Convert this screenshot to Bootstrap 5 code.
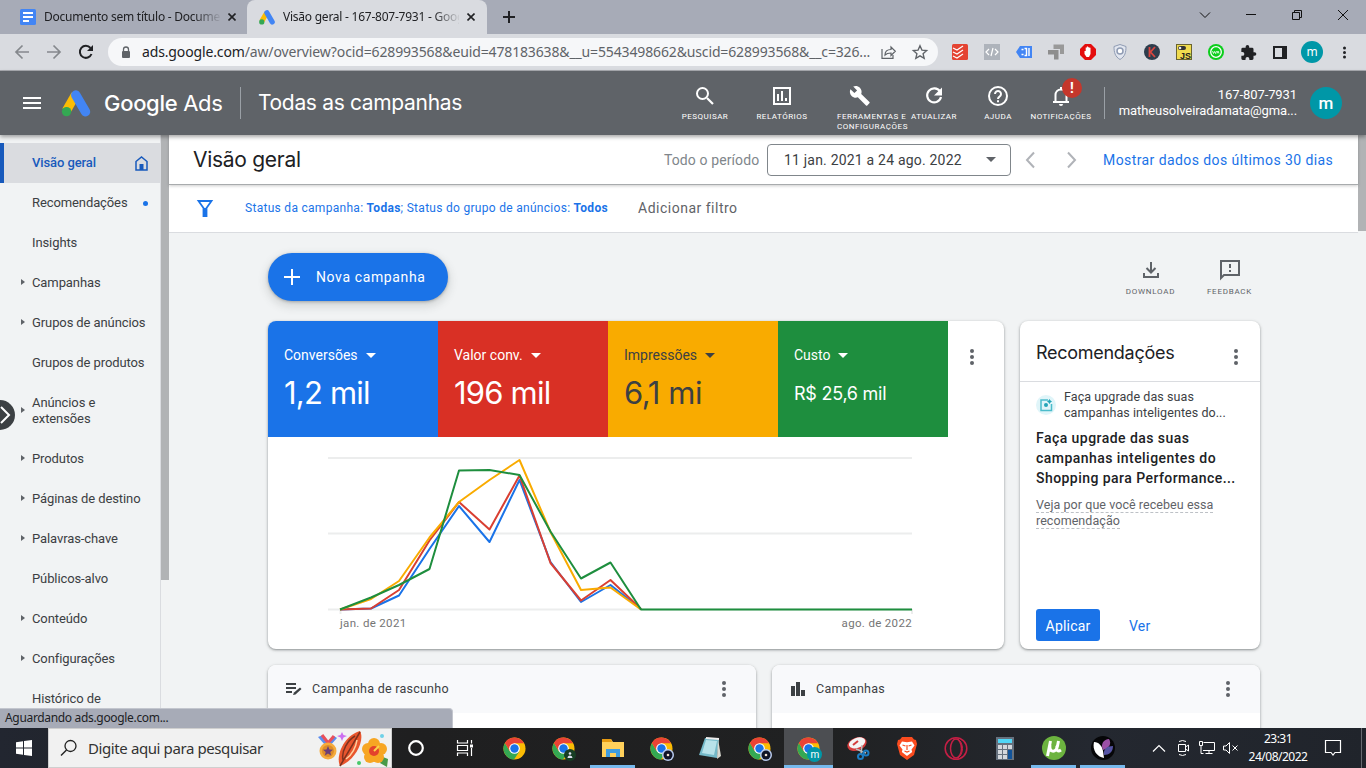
<!DOCTYPE html>
<html lang="pt-BR">
<head>
<meta charset="utf-8">
<title>Visão geral - Google Ads</title>
<link href="https://cdn.jsdelivr.net/npm/bootstrap@5.3.0/dist/css/bootstrap.min.css" rel="stylesheet">
<style>
html,body{width:1366px;height:768px;overflow:hidden}
body{font-family:Roboto,"Liberation Sans",sans-serif;font-size:13px;line-height:16px;color:#3c4043;background:#f1f3f4}
svg{display:block;flex:none;overflow:visible}
.gs{font-family:Inter,Roboto,sans-serif}
.sys{font-family:"Noto Sans","Open Sans",sans-serif}
.nw{white-space:nowrap}
.w-box{flex:none;display:flex;align-items:center;justify-content:center}
/* browser chrome */
.tabstrip{height:34px;background:#a7abb7;font-size:12px;color:#202124}
.tab-a{width:247px;padding-left:20px}
.tab-b{width:240px;padding-left:12px;background:#d9dbe0;border-radius:8px 8px 0 0;color:#202124}
.tab-t{width:176px;margin-left:8px;letter-spacing:-.24px;-webkit-mask-image:linear-gradient(90deg,#000 150px,transparent 178px);mask-image:linear-gradient(90deg,#000 150px,transparent 178px)}
.toolbar{height:37px;background:#d9dbe0;border-bottom:1px solid #a9abb0}
.omni{width:830px;height:28px;border-radius:14px;background:#f6f7f9;font-size:14px;color:#5f6368;padding-left:12px}
.omni b{font-weight:400;color:#202124}
.url{width:727px;margin-left:10px;letter-spacing:-.14px}
.ext{width:32px}
.av{border-radius:50%;background:#0097a7;color:#fff}
/* ads header */
.adsbar{height:64px;background:#5f6368;color:#fff;z-index:5;box-shadow:0 2px 4px rgba(0,0,0,.35)}
.vline{width:1px;height:32px;background:#9aa0a6;flex:none}
.tool{flex:none;display:flex;flex-direction:column;align-items:center;padding-top:13px;font-size:8px;line-height:10px;letter-spacing:.5px;height:64px;position:relative}
.tool svg{margin-bottom:4px}
.warn{position:absolute;width:20px;height:20px;border-radius:50%;background:#c5372c;left:34px;top:7px;font-size:14px;font-weight:700;line-height:20px;text-align:center;letter-spacing:0}
/* page */
.pagearea{height:593px;overflow:hidden}
.sidebar{width:161px;border-right:1px solid #dadce0;padding-top:8px}
.sideitem{height:40px;padding-left:32px;letter-spacing:-.1px;display:flex;align-items:center;position:relative;flex:none}
.sideitem.tall{height:56px}
.sideitem.sel{background:#dadce0;color:#185abc;border-left:4px solid #185abc;padding-left:28px;font-weight:500;letter-spacing:-.1px}
.sideitem.sub::before{content:"";position:absolute;left:21px;top:50%;margin-top:-4px;border:3px solid transparent;border-left:4px solid #5f6368;border-right:0}
.thumb{width:8px;background:#b1b3b5;flex:none}
.knob{position:absolute;left:-15px;top:265px;width:30px;height:30px;border-radius:50%;background:#3c4043;z-index:3}
.titlebar{height:50px;background:#fff;border-bottom:1px solid #a8abad;box-shadow:0 1px 3px rgba(0,0,0,.2);z-index:2;position:relative}
.filterbar{height:48px;background:#fff;border-bottom:1px solid #dadce0;padding-bottom:2px}
.datebox{width:244px;height:32px;border:1px solid #80868b;border-radius:4px;padding:0 14px 0 16px;font-size:14px;letter-spacing:.2px}
.blue{color:#1a73e8}
.content{padding:20px 98px 0 99px}
.fab{width:180px;height:48px;border-radius:24px;background:#1a73e8;color:#fff;font-size:14px;letter-spacing:.62px;padding:0 0 0 12px;border:0;box-shadow:0 1px 3px rgba(60,64,67,.35),0 4px 8px 2px rgba(60,64,67,.15)}
.mini{font-size:8px;line-height:10px;letter-spacing:.75px;color:#5f6368;width:79px;display:flex;flex-direction:column;align-items:center;gap:5px;padding-top:5px}
.panel{background:#fff;border-radius:8px;box-shadow:0 1px 2px rgba(60,64,67,.4),0 1px 3px 1px rgba(60,64,67,.15);overflow:hidden;flex:none}
.metric{width:170px;height:116px;padding:26px 0 0 16px;color:#fff;font-size:14px;flex:none}
.metric .val{font-size:31px;line-height:40px;margin-top:10px;letter-spacing:-.8px}
.caret{display:inline-block;border:5px solid transparent;border-top-color:currentColor;border-bottom:0;margin-left:8px;vertical-align:2px}
.rechead{height:61px;border-bottom:1px solid #dadce0;font-size:18px;color:#202124}
.dash{border-bottom:1px dashed #bdc1c6}
.phead{height:48px;background:#f8f9fb;padding-left:16px}
.statusbar{position:absolute;left:0;top:708px;width:453px;height:20px;background:#a7abb7;border-top:1px solid #c3c6ce;border-right:1px solid #c3c6ce;border-radius:0 4px 0 0;font-size:12px;line-height:18px;letter-spacing:-.33px;padding-left:5px;color:#202124;z-index:6}
/* taskbar */
.taskbar{height:40px;background:linear-gradient(90deg,#222630,#1f1f20 30%,#202122 60%,#242830 80%,#20242b);color:#fff}
.tsearch{width:344px;height:40px;background:#f1f1f1;border:1px solid #cfcfcf;color:#333;font-size:15px;padding-left:11px}
.ti{width:49px;height:40px;border-bottom:3px solid transparent;padding-top:3px}
.ti.run{border-image:linear-gradient(90deg,transparent 5px,#76b9ed 5px,#76b9ed 44px,transparent 44px) 3}
.ti.act{background:#4c4e52;border-bottom-color:#76b9ed}
</style>
</head>
<body class="d-flex flex-column position-relative">
<svg width="0" height="0" class="position-absolute">
<defs>
<symbol id="dots" viewBox="0 0 4 16"><circle cx="2" cy="2" r="2"/><circle cx="2" cy="8" r="2"/><circle cx="2" cy="14" r="2"/></symbol>
<symbol id="ads" viewBox="0 0 30 28"><path d="M14.5 5 5 21.5" stroke="#fbbc04" stroke-width="9.5"/><path d="M14.8 5.2 24.8 22.5" stroke="#4285f4" stroke-width="9.8" stroke-linecap="round"/><circle cx="5.2" cy="22.4" r="4.9" fill="#34a853"/></symbol>
<symbol id="chrome" viewBox="0 0 24 24"><circle cx="12" cy="12" r="11.5" fill="#fbbc04"/><path d="M2 6.300A11.500 11.500 0 0 0 11.500 23.500L17 15 7 14.500z" fill="#34a853"/><path d="M2 6.300A11.500 11.500 0 0 1 22 6.500H12L7 14.500z" fill="#ea4335"/><circle cx="12" cy="12" r="5.600" fill="#fff"/><circle cx="12" cy="12" r="4.400" fill="#1a73e8"/></symbol>
<symbol id="x" viewBox="0 0 8 8"><path d="M.5.5l7 7M7.500.5l-7 7" stroke="#202124" stroke-width="1.600"/></symbol>
</defs>
</svg>

<div class="tabstrip sys d-flex flex-shrink-0">
  <div class="tab-a d-flex align-items-center">
    <svg width="16" height="16"><rect width="16" height="16" rx="1.500" fill="#4285f4"/><path d="M3 4h10M3 8h10M3 12h6" stroke="#fff" stroke-width="2"/></svg>
    <span class="tab-t nw">Documento sem título - Docume</span>
    <svg width="8" height="8" class="ms-2"><use href="#x"/></svg>
  </div>
  <div class="tab-b d-flex align-items-center">
    <svg width="16" height="15"><use href="#ads"/></svg>
    <span class="tab-t nw">Visão geral - 167-807-7931 - Goog</span>
    <svg width="8" height="8" class="ms-2"><use href="#x"/></svg>
  </div>
  <div class="w-box" style="width:44px"><svg width="12" height="12"><path d="M6 0v12M0 6h12" stroke="#202124" stroke-width="2"/></svg></div>
  <div class="d-flex ms-auto align-items-center" style="height:29px">
    <div class="w-box" style="width:46px"><svg width="10" height="6"><path d="M0 .5l5 5 5-5" stroke="#111" fill="none"/></svg></div>
    <div class="w-box" style="width:46px"><svg width="10" height="1"><path d="M0 .5h10" stroke="#111"/></svg></div>
    <div class="w-box" style="width:46px"><svg width="10" height="10"><path d="M.5 2.500h7v7h-7zM2.500 2V.5h7v7H8" stroke="#111" fill="none"/></svg></div>
    <div class="w-box" style="width:46px"><svg width="10" height="10"><path d="M0 0l10 10M10 0L0 10" stroke="#111"/></svg></div>
  </div>
</div>

<div class="toolbar sys d-flex align-items-center flex-shrink-0">
  <div class="w-box" style="width:44px"><svg width="14" height="14"><path d="M14 7H1M7.500.5L1 7l6.500 6.500" stroke="#85888d" stroke-width="1.700" fill="none"/></svg></div>
  <div class="w-box" style="width:20px"><svg width="14" height="14"><path d="M0 7h13M6.500.5L13 7l-6.500 6.500" stroke="#85888d" stroke-width="1.700" fill="none"/></svg></div>
  <div class="w-box" style="width:44px"><svg width="14" height="14"><path d="M12.500 9A6 6 0 1 1 11.500 3" stroke="#202124" stroke-width="2" fill="none"/><path d="M14 0v6H8z" fill="#202124"/></svg></div>
  <div class="omni d-flex align-items-center">
    <svg width="12" height="13"><rect x="2" y="5" width="8" height="7" rx="1" fill="#5f6368"/><path d="M3.500 5V3.500a2.500 2.500 0 0 1 5 0V5" stroke="#5f6368" stroke-width="1.300" fill="none"/></svg>
    <div class="url nw"><b>ads.google.com</b>/aw/overview?ocid=628993568&amp;euid=478183638&amp;__u=5543498662&amp;uscid=628993568&amp;__c=326...</div>
    <svg width="15" height="13" style="margin-left:12px"><path d="M1 3v9.300h11V9M4 9c0-4 3-5.500 6-5.500V1l4.300 4.300L10 9.500V7C7.500 7 5.500 7.500 4 9z" stroke="#5f6368" stroke-width="1.200" fill="none"/></svg>
    <svg width="16" height="16" style="margin-left:16px" viewBox="0 0 24 24"><path d="M12 2.500l2.900 6.700 7.100.6-5.400 4.700 1.700 7.100L12 17.800l-6.300 3.800 1.700-7.100L2 9.800l7.100-.6z" stroke="#5f6368" stroke-width="2" fill="none"/></svg>
  </div>
  <div class="d-flex align-items-center" style="margin-left:6px">
    <div class="w-box ext"><svg width="16" height="16"><rect width="16" height="16" rx="1.500" fill="#e44332"/><path d="M1 4l4 2 6-4M1 8l4 2 6-4M1 12l4 2 6-4" stroke="#fff" fill="none" stroke-width="1.200"/></svg></div>
    <div class="w-box ext"><svg width="16" height="16"><rect width="16" height="16" fill="#aeb3bb"/><path d="M5 5L2 8l3 3M11 5l3 3-3 3M9 4L7 12" stroke="#fff" fill="none" stroke-width="1.200"/></svg></div>
    <div class="w-box ext"><svg width="16" height="12"><path d="M4 0h12v12H4L0 6z" fill="#4285f4"/><path d="M5.500 3.500h2M5.500 8.500h2M8.500 2.500h2v7h-2M13 2v8" stroke="#fff" fill="none" stroke-width="1.400"/></svg></div>
    <div class="w-box ext"><svg width="16" height="16"><path d="M5.500.5H16V10h-4V5H5.500z" fill="#999"/><path d="M0 6h10.500v9.500H6V10.500H0z" fill="#8e8e8e"/></svg></div>
    <div class="w-box ext"><svg width="16" height="16"><path d="M5 0h6l5 5v6l-5 5H5l-5-5V5z" fill="#e40d0d"/><path d="M4.500 7h1.200V3.500h1.200V2.500h1.200v.7h1.200v.6h1.200V10l-1.500 3H6.500L4.500 10z" fill="#fff"/></svg></div>
    <div class="w-box ext"><svg width="14" height="16"><path d="M7 .5l6 2c0 6-1 10-6 13C2 12.500 1 8.500 1 2.500z" fill="#e2e6ef" stroke="#8f9bb3"/><circle cx="7" cy="7" r="3" fill="#fff" stroke="#8f9bb3" stroke-width="1.500"/></svg></div>
    <div class="w-box ext"><svg width="16" height="16"><circle cx="8" cy="8" r="8" fill="#2e3d4d"/><path d="M5.500 3v10M11 3L6.500 8 11 13" stroke="#d9453f" stroke-width="1.800" fill="none"/></svg></div>
    <div class="w-box ext"><svg width="16" height="16"><rect x=".5" y=".5" width="15" height="15" fill="#f0db4f" stroke="#6a6430"/><rect x="2" y="2" width="8" height="4" rx="2" fill="#333"/><circle cx="4" cy="4" r="1.300" fill="#eee"/><text x="4" y="14.500" font-size="9" font-weight="700" fill="#222" font-family="Liberation Sans">JS</text></svg></div>
    <div class="w-box ext"><svg width="16" height="16"><circle cx="8" cy="8" r="8" fill="#0bce1b"/><circle cx="8" cy="8" r="5.300" fill="none" stroke="#fff" stroke-width="1.300"/><path d="M4.500 7l1 2.500 1-2 1 2 1-2.500M9 9.500L10 7l1 2.500" stroke="#fff" fill="none" stroke-width=".8"/></svg></div>
    <div class="w-box ext"><svg width="15" height="15" viewBox="2 1 20 21"><path d="M20.500 11H19V7a2 2 0 0 0-2-2h-4V3.500a2.500 2.500 0 0 0-5 0V5H4a2 2 0 0 0-2 2v3.800h1.500a2.700 2.700 0 0 1 0 5.400H2V20a2 2 0 0 0 2 2h3.800v-1.500a2.700 2.700 0 0 1 5.400 0V22H17a2 2 0 0 0 2-2v-4h1.500a2.500 2.500 0 0 0 0-5z" fill="#202124"/></svg></div>
    <div class="w-box ext"><svg width="14" height="13"><path d="M1 1h12v11H1z" stroke="#202124" stroke-width="2" fill="none"/><path d="M9 1h4v11H9z" fill="#202124"/></svg></div>
    <div class="w-box ext"><div class="w-box av" style="width:22px;height:22px"><span style="font-size:12px;line-height:18px">m</span></div></div>
    <div class="w-box ext"><svg width="3" height="13" fill="#202124"><use href="#dots"/></svg></div>
  </div>
</div>

<div class="adsbar d-flex align-items-center flex-shrink-0 position-relative">
  <svg width="18" height="12" style="margin-left:23px"><path d="M0 1h18M0 6h18M0 11h18" stroke="#fff" stroke-width="2"/></svg>
  <svg width="30" height="27" style="margin-left:20px"><use href="#ads"/></svg>
  <div class="nw gs" style="width:136px;margin-left:13px;font-size:22px;letter-spacing:-.3px"><span style="font-weight:500">Google</span> Ads</div>
  <div class="vline"></div>
  <div class="nw gs" style="width:408px;margin-left:17px;font-size:21px;letter-spacing:-.33px">Todas as campanhas</div>
  <div class="tool" style="width:78px"><svg width="24" height="24" viewBox="0 0 24 24"><circle cx="9.500" cy="9.500" r="5.500" stroke="#fff" stroke-width="2" fill="none"/><path d="M14 14l6 6" stroke="#fff" stroke-width="2.200"/></svg>PESQUISAR</div>
  <div class="tool" style="width:76px"><svg width="24" height="24"><path d="M4 4h16v16H4zM8 10v7M12 7v10M16 14v3" stroke="#fff" stroke-width="2" fill="none"/></svg>RELATÓRIOS</div>
  <div class="tool nw" style="width:80px"><svg width="24" height="24" viewBox="0 0 24 24"><path fill="#fff" d="M22.700 19l-9.100-9.100c.9-2.300.4-5-1.500-6.900-2-2-5-2.400-7.400-1.300L9 6 6 9 1.600 4.700C.4 7.100.9 10.100 2.900 12.100c1.900 1.900 4.600 2.400 6.900 1.500l9.100 9.100c.4.400 1 .4 1.400 0l2.300-2.300c.5-.4.500-1.100.1-1.400z" transform="translate(1 1) scale(.9)"/></svg><span style="margin-left:25px;letter-spacing:.55px">FERRAMENTAS E<br>CONFIGURAÇÕES</span></div>
  <div class="tool" style="width:68px"><svg width="24" height="24"><path d="M18 7.500A7 7 0 1 0 19 13" stroke="#fff" stroke-width="2.200" fill="none"/><path d="M20 3.500v8h-8z" fill="#fff"/></svg>ATUALIZAR</div>
  <div class="tool" style="width:60px"><svg width="24" height="24"><circle cx="12" cy="12" r="9" stroke="#fff" stroke-width="2" fill="none"/><path d="M9 10a3 3 0 1 1 4.500 2.600C12.400 13.300 12 13.700 12 15M12 16.200v2" stroke="#fff" stroke-width="2" fill="none"/></svg>AJUDA</div>
  <div class="tool" style="width:66px"><svg width="24" height="24"><path d="M4 18h16M6.500 18v-7c0-3 2-5.500 5.500-5.500s5.500 2.500 5.500 5.500v7M12 3v3" stroke="#fff" stroke-width="2" fill="none"/><path d="M10 20h4a2 2 0 0 1-4 0z" fill="#fff"/></svg>NOTIFICAÇÕES<span class="warn">!</span></div>
  <div class="vline" style="margin-left:10px"></div>
  <div class="text-end nw" style="width:192px;letter-spacing:-.09px">167-807-7931<br>matheusolveiradamata@gma...</div>
  <div class="w-box av" style="width:32px;height:32px;margin-left:13px;font-size:17px;font-weight:500">m</div>
</div>

<div class="pagearea d-flex position-relative flex-shrink-0">
  <div class="knob"><svg width="30" height="30"><path d="M16 7l8 8-8 8" stroke="#fff" stroke-width="2" fill="none"/></svg></div>
  <nav class="sidebar d-flex flex-column flex-shrink-0">
    <div class="sideitem sel">Visão geral<svg class="ms-auto" style="margin-right:12px" width="13" height="15"><path d="M1 5.500L6.500 1 12 5.500V14H1z" stroke="#185abc" stroke-width="1.500" fill="none"/><path d="M4.500 8h4v6h-4z" fill="#185abc"/></svg></div>
    <div class="sideitem">Recomendações<svg class="ms-auto" style="margin-right:7px" width="12" height="6"><circle cx="4.500" cy="3.500" r="2.500" fill="#1a73e8"/></svg></div>
    <div class="sideitem">Insights</div>
    <div class="sideitem sub">Campanhas</div>
    <div class="sideitem sub">Grupos de anúncios</div>
    <div class="sideitem">Grupos de produtos</div>
    <div class="sideitem sub tall">Anúncios e<br>extensões</div>
    <div class="sideitem sub">Produtos</div>
    <div class="sideitem sub">Páginas de destino</div>
    <div class="sideitem sub">Palavras-chave</div>
    <div class="sideitem">Públicos-alvo</div>
    <div class="sideitem sub">Conteúdo</div>
    <div class="sideitem sub">Configurações</div>
    <div class="sideitem">Histórico de</div>
  </nav>
  <div class="thumb" style="height:445px"></div>
  <main class="flex-grow-1">
    <div class="titlebar d-flex align-items-center">
      <div class="gs nw" style="width:471px;margin-left:24px;font-size:21px;color:#202124;letter-spacing:-.28px">Visão geral</div>
      <div class="nw" style="width:103px;font-size:14px;color:#80868b;letter-spacing:.1px">Todo o período</div>
      <div class="datebox d-flex align-items-center justify-content-between nw">11 jan. 2021 a 24 ago. 2022<i class="caret" style="color:#5f6368"></i></div>
      <svg width="9" height="16" style="margin-left:15px"><path d="M8 .5L1 8l7 7.500" stroke="#b0b3b8" stroke-width="2" fill="none"/></svg>
      <svg width="9" height="16" style="margin-left:32px"><path d="M1 .5L8 8l-7 7.500" stroke="#b0b3b8" stroke-width="2" fill="none"/></svg>
      <div class="blue nw" style="margin-left:27px;font-size:14px;letter-spacing:.42px">Mostrar dados dos últimos 30 dias</div>
    </div>
    <div class="filterbar d-flex align-items-center">
      <svg width="16" height="16" style="margin-left:28px"><path d="M1.500 1h13L9.500 8v8h-3V8z" stroke="#1a73e8" stroke-width="1.800" fill="none"/><path d="M6 8h4v8H6z" fill="#1a73e8"/></svg>
      <div class="blue nw" style="width:393px;margin-left:32px;font-size:12px;letter-spacing:.29px">Status da campanha: <b>Todas</b>; Status do grupo de anúncios: <b>Todos</b></div>
      <div class="nw" style="font-size:14px;color:#5f6368;letter-spacing:.5px">Adicionar filtro</div>
    </div>
    <div class="content">
      <div class="d-flex justify-content-between" style="height:68px">
        <button class="fab d-flex align-items-center"><svg width="24" height="24"><path d="M12 4v16M4 12h16" stroke="#fff" stroke-width="2"/></svg><span class="nw" style="margin-left:12px">Nova campanha</span></button>
        <div class="d-flex" style="margin-right:-9px">
          <div class="mini"><svg width="24" height="24"><path d="M12 4v10M7.500 10l4.500 4.500 4.500-4.500M5 15v4h14v-4" stroke="#5f6368" stroke-width="2" fill="none"/></svg>DOWNLOAD</div>
          <div class="mini"><svg width="24" height="24"><path d="M3 3h18v14H6l-3 3z" stroke="#5f6368" stroke-width="2" fill="none"/><path d="M12 6v4M12 12v2" stroke="#5f6368" stroke-width="2"/></svg>FEEDBACK</div>
        </div>
      </div>
      <div class="d-flex gap-3">
        <div class="panel" style="width:736px;height:328px">
          <div class="d-flex">
            <div class="metric" style="background:#1a73e8"><div>Conversões<i class="caret"></i></div><div class="val gs">1,2 mil</div></div>
            <div class="metric" style="background:#d93025"><div>Valor conv.<i class="caret"></i></div><div class="val gs">196 mil</div></div>
            <div class="metric" style="background:#f9ab00;color:#3c4043"><div>Impressões<i class="caret"></i></div><div class="val gs" style="letter-spacing:-.4px">6,1 mi</div></div>
            <div class="metric" style="background:#1e8e3e"><div>Custo<i class="caret"></i></div><div class="val gs" style="font-size:18px;letter-spacing:-.25px;line-height:42px">R$ 25,6 mil</div></div>
            <svg width="4" height="16" fill="#5f6368" style="margin:28px 0 0 22px"><use href="#dots"/></svg>
          </div>
          <svg width="736" height="212" viewBox="268 437 736 212" fill="none" stroke-width="2" stroke-linejoin="round">
            <path d="M328 458h584M328 533.500h584M328 609.500h584M340.500 609v5M912 609v5" stroke="#eceded"/>
            <path stroke="#1a73e8" d="M340 609.500L371 608.500 399 595.500 429.500 549 459 506 489.500 542 519.500 480 550.500 562 581 602 610.500 585 641 609"/>
            <path stroke="#d93f32" d="M340 609.500L371 608.500 399 590 429.500 540.500 459 502 489.500 529.500 519.500 475.500 550.500 563 581 600.500 610.500 580 641 609"/>
            <path stroke="#f9ab00" d="M340 609.500L371 599 399 581 429.500 537.500 459 502 489.500 480 519.500 460 550.500 532 581 590 610.500 587.500 641 609.500"/>
            <path stroke="#1e8e3e" d="M340 609.500L371 597.500 399 585 429.500 569 459 470.500 489.500 470 519.500 475 550.500 531.500 581 578.500 610.500 562.500 641 609.500H912"/>
            <g fill="#757575" stroke="none" font-family="Roboto" font-size="11.500" letter-spacing=".33"><text x="340" y="627">jan. de 2021</text><text x="912" y="627" text-anchor="end">ago. de 2022</text></g>
          </svg>
        </div>
        <div class="panel d-flex flex-column" style="width:240px;height:328px">
          <div class="rechead d-flex flex-shrink-0"><span class="gs" style="margin:24px 0 0 16px;letter-spacing:-.28px">Recomendações</span><svg width="4" height="16" fill="#5f6368" style="margin:28px 22px 0 auto"><use href="#dots"/></svg></div>
          <div class="d-flex" style="padding:7px 0 0 16px">
            <svg width="20" height="20" style="margin-top:6px"><circle cx="10" cy="10" r="10" fill="#e0f5f9"/><path d="M12 5H5v10.500h10.500V9" stroke="#4bbccb" stroke-width="1.500" fill="none"/><circle cx="10" cy="10" r="2" fill="#24a5b8"/><path d="M13.500 4l1 1.500 1.500 1-1.500 1-1 1.500-1-1.500-1.500-1 1.500-1z" fill="#24a5b8"/></svg>
            <div class="nw" style="margin-left:8px;letter-spacing:.07px;font-size:12.500px">Faça upgrade das suas<br>campanhas inteligentes do...</div>
          </div>
          <div class="nw" style="margin:7px 0 0 16px;font-size:14px;line-height:20px;font-weight:500;color:#202124;letter-spacing:.45px">Faça upgrade das suas<br>campanhas inteligentes do<br>Shopping para Performance...</div>
          <div class="nw" style="margin:9px 0 0 16px;font-size:12.500px;color:#5f6368;letter-spacing:.06px"><span class="dash">Veja por que você recebeu essa</span><br><span class="dash">recomendação</span></div>
          <div class="d-flex align-items-center mt-auto" style="margin:0 0 8px 16px;font-size:14px;letter-spacing:.2px"><div class="w-box" style="width:64px;height:32px;border-radius:3px;background:#1a73e8;color:#fff;padding-top:2px">Aplicar</div><span class="blue" style="margin-left:29px;padding-top:2px">Ver</span></div>
        </div>
      </div>
      <div class="d-flex gap-3 mt-3">
        <div class="panel" style="width:488px;height:90px"><div class="phead d-flex align-items-center"><svg width="20" height="20"><path d="M2 5h10M2 9h10M2 13h6" stroke="#3c4043" stroke-width="1.800"/><path d="M9 16l1-2.500 6-5 1.500 1.500-6 5.500z" fill="#3c4043"/></svg><span class="nw" style="margin-left:8px;font-size:12.500px;letter-spacing:.25px">Campanha de rascunho</span><svg width="4" height="16" fill="#5f6368" class="ms-auto" style="margin-right:30px"><use href="#dots"/></svg></div></div>
        <div class="panel" style="width:488px;height:90px"><div class="phead d-flex align-items-center"><svg width="20" height="20"><path d="M3 7h4v10H3zM8 3h4v14H8zM13 11h4v6h-4z" fill="#3c4043"/></svg><span class="nw" style="margin-left:8px;font-size:12.500px;letter-spacing:.25px">Campanhas</span><svg width="4" height="16" fill="#5f6368" class="ms-auto" style="margin-right:30px"><use href="#dots"/></svg></div></div>
      </div>
    </div>
  </main>
  <div class="thumb" style="height:96px"></div>
</div>

<div class="statusbar sys">Aguardando ads.google.com...</div>

<div class="taskbar sys d-flex flex-shrink-0">
  <div class="w-box" style="width:48px"><svg width="16" height="16"><path d="M0 2.300L7 1.200V7.500H0zM8 1L16 0v7.500H8zM0 8.500h7v6.300L0 13.700zM8 8.500h8V16l-8-1z" fill="#fff"/></svg></div>
  <div class="tsearch d-flex align-items-center"><svg width="18" height="18"><circle cx="10.500" cy="7" r="5.500" stroke="#222" stroke-width="1.300" fill="none"/><path d="M6.500 11L1 16.500" stroke="#222" stroke-width="1.500"/></svg><span class="nw" style="margin-left:10px;width:229px;letter-spacing:-.4px">Digite aqui para pesquisar</span>
    <svg width="72" height="38">
      <path d="M1 8l7 8 3-3-5-7zM17 7l-8 8 3 3 8-9z" fill="#5b8def"/><path d="M5 6l7 9M17 7l-6 7" stroke="#e94f5a" stroke-width="3"/><circle cx="11" cy="22" r="8.500" fill="#f5ab3d"/><circle cx="11" cy="22" r="6" fill="#dd8c2a"/><path d="M11 17l1.500 3.500 3.500.3-2.700 2.300.8 3.500-3.100-2-3.100 2 .8-3.500L6 20.800l3.500-.3z" fill="#6b3e78"/>
      <path d="M23 37C18 26 28 6 43 2c5 9-4 29-20 35z" fill="#e8552d"/><path d="M23 37L43 3M26 31C24 22 31 11 38 7" stroke="#7d321f" stroke-width="1.500" fill="none"/><path d="M29 30c6-4 10-12 11-19" stroke="#ffd0a0" stroke-width="1.500" fill="none"/>
      <path d="M25 3l1.500 3 3.500 1-3.500 1.500L25 12l-1.500-3.500L20 7l3.500-1z" fill="#cc6ff0"/><path d="M66 28l5 2-1 8-7-4z" fill="#489a49"/>
      <g fill="#f7a623"><circle cx="57" cy="15" r="6"/><circle cx="64" cy="20" r="6"/><circle cx="61" cy="28" r="6"/><circle cx="53" cy="28" r="6"/><circle cx="51" cy="20" r="6"/></g><circle cx="57" cy="22" r="5" fill="#e3422c"/><path d="M57 22l5-5" stroke="#fbd44a" stroke-width="2"/><circle cx="65" cy="7" r="2" fill="#6fd1e8"/><circle cx="42" cy="34" r="2" fill="#45c969"/>
    </svg>
  </div>
  <div class="d-flex">
    <div class="w-box ti" style="width:48px"><svg width="16" height="16"><circle cx="8" cy="8" r="6.800" stroke="#fff" stroke-width="2.200" fill="none"/></svg></div>
    <div class="w-box ti"><svg width="16" height="16"><path d="M.5 0v3h10V0M.5 16v-3h10v3M.5 5.500h10v5H.5zM14.500 0v3.500M14.500 8v8" stroke="#fff" stroke-width="1.200" fill="none"/><path d="M13 4.500h3v3h-3z" fill="#fff"/></svg></div>
    <div class="w-box ti" style="margin-left:1px"><svg width="23" height="23"><use href="#chrome"/></svg></div>
    <div class="w-box ti"><svg width="23" height="23"><use href="#chrome"/><circle cx="18" cy="18" r="6" fill="#173d24"/><circle cx="18" cy="16.500" r="1.300" fill="#dde"/><path d="M15.500 21a2.500 2.500 0 0 1 5 0z" fill="#dde"/></svg></div>
    <div class="w-box ti run"><svg width="22" height="18"><path d="M0 0h9l2 3h11v15H0z" fill="#ffd05b"/><path d="M0 0h9l1 3H0z" fill="#e79b12"/><path d="M4 18v-8h14v8h-4v-4H8v4z" fill="#3f9de0"/></svg></div>
    <div class="w-box ti"><svg width="23" height="23"><use href="#chrome"/><circle cx="18" cy="18" r="6" fill="#b9cbee"/><circle cx="18" cy="18" r="4.500" fill="#101326"/><circle cx="18" cy="18" r="1.300" fill="#f0e0d0"/></svg></div>
    <div class="w-box ti"><svg width="23" height="22"><path d="M6 1l14 1-2 19L0 18z" fill="#74b9c9"/><path d="M7 3l11 1-3 14-12-2z" fill="#b8e2ea"/><path d="M19 2l3 17-4 3z" fill="#d8d8d0"/><path d="M7 1l13 1" stroke="#eee" stroke-width="2"/></svg></div>
    <div class="w-box ti"><svg width="23" height="23"><use href="#chrome"/><circle cx="18" cy="18" r="6" fill="#b9cbee"/><circle cx="18" cy="18" r="4.500" fill="#101326"/><circle cx="18" cy="18" r="1.300" fill="#f0e0d0"/></svg></div>
    <div class="w-box ti act"><svg width="23" height="23"><use href="#chrome"/><circle cx="17.500" cy="17.500" r="7.500" fill="#0097a7"/><text x="13.500" y="21" font-size="10" fill="#fff" font-family="Roboto">m</text></svg></div>
    <div class="w-box ti"><svg width="24" height="24"><ellipse cx="11" cy="8" rx="10" ry="6.500" fill="#d43c3c" transform="rotate(-20 11 8)"/><ellipse cx="11.500" cy="7" rx="8.500" ry="5" fill="#f4f4f4" transform="rotate(-20 11 8)"/><path d="M7 9l5-4" stroke="#d43c3c" stroke-width="2"/><path d="M10 13l10 4M16 9l-1 9" stroke="#bbb" stroke-width="1.500"/><circle cx="20" cy="17" r="2.500" fill="none" stroke="#1c7dc4" stroke-width="2"/><circle cx="14.500" cy="20.500" r="2.500" fill="none" stroke="#1c7dc4" stroke-width="2"/></svg></div>
    <div class="w-box ti"><svg width="20" height="23"><path d="M5 0h10l2 2.500 2 .5 1 4-3 11-7 5-7-5L0 7l1-4 2-.5z" fill="#fb4c1f"/><path d="M5 4.500l5 .8 5-.8 2.500 4-3 4 .7 2.500-5.200 4-5.200-4 .7-2.500-3-4z" fill="#fff"/><path d="M10 8v5M5.500 8l3 1M14.500 8l-3 1M7.500 14l2.500 1 2.500-1" stroke="#fb4c1f" stroke-width="1.200" fill="none"/></svg></div>
    <div class="w-box ti"><svg width="24" height="23"><circle cx="12" cy="11.500" r="10.800" stroke="#c51f45" stroke-width="1.500" fill="none"/><ellipse cx="12" cy="11.500" rx="5.500" ry="9.500" stroke="#c51f45" stroke-width="1.500" fill="none"/><path d="M14 2c6 4 6 15 0 19" stroke="#c51f45" fill="none"/></svg></div>
    <div class="w-box ti"><svg width="18" height="23"><rect width="18" height="23" fill="#66717e"/><path d="M2 2h14v4H2z" fill="#50d7f7"/><path d="M2 8h4v4H2zM7 8h4v4H7zM12 8h4v4h-4zM2 13h4v4H2zM7 13h4v4H7zM2 18h4v4H2zM7 18h4v4H7z" fill="#d4d8dd"/><path d="M12 13h4v9h-4z" fill="#11539a"/></svg></div>
    <div class="w-box ti run"><svg width="24" height="24"><circle cx="12" cy="12" r="12" fill="#6cb33f"/><path d="M8.500 5L5.500 20M8 9c-1.500 8 6 8 7.500 1l1-5M15 10c-1 5 1 6 4 4" stroke="#fff" stroke-width="3" fill="none"/></svg></div>
    <div class="w-box ti run"><svg width="24" height="24"><circle cx="12" cy="12" r="12" fill="#060608"/><path d="M3 6c5 0 8 4 9 9l1 7C6 21 1 14 3 6z" fill="#fff"/><path d="M12 14C9 8 13 3 18 3c3 5 0 9-6 11z" fill="#9b4fa5"/><path d="M13 19c-1-6 3-9 9-9 0 6-4 9-9 9z" fill="#5654a4"/></svg></div>
  </div>
  <div class="d-flex align-items-center ms-auto">
    <div class="w-box" style="width:24px"><svg width="12" height="7"><path d="M0 6.500l6-6 6 6" stroke="#fff" stroke-width="1.200" fill="none"/></svg></div>
    <div class="w-box" style="width:24px"><svg width="12" height="16"><path d="M1.500 4.500h7v7h-7zM8.500 7l3-2v6l-3-2M2 1.500q3.500-2 7 0M2 14.500q3.500 2 7 0" stroke="#fff" fill="none"/></svg></div>
    <div class="w-box" style="width:24px"><svg width="16" height="14"><path d="M4.500 1.500h11v8H4M10 9.500v3M6.500 12.500h7M.5.500h3v4h-3zM2 4.500v8h2.500" stroke="#fff" fill="none"/></svg></div>
    <div class="w-box" style="width:22px"><svg width="15" height="12"><path d="M.5 4h2.500l3.500-3.500v11L3 8H.5zM9.500 3.500l5 5M14.500 3.500l-5 5" stroke="#fff" fill="none"/></svg></div>
    <div class="text-center nw" style="width:74px;font-size:12px;line-height:18px;letter-spacing:-.5px">23:31<br>24/08/2022</div>
    <div class="w-box" style="width:36px"><svg width="16" height="16"><path d="M.5.500h15v12H10L8 15l-2-2.500H.5z" stroke="#fff" fill="none" stroke-width="1.200"/></svg></div>
    <div style="width:1px;height:40px;margin:0 4px 0 10px;background:#666a70"></div>
  </div>
</div>
<script src="https://cdn.jsdelivr.net/npm/bootstrap@5.3.0/dist/js/bootstrap.bundle.min.js"></script>
</body>
</html>
